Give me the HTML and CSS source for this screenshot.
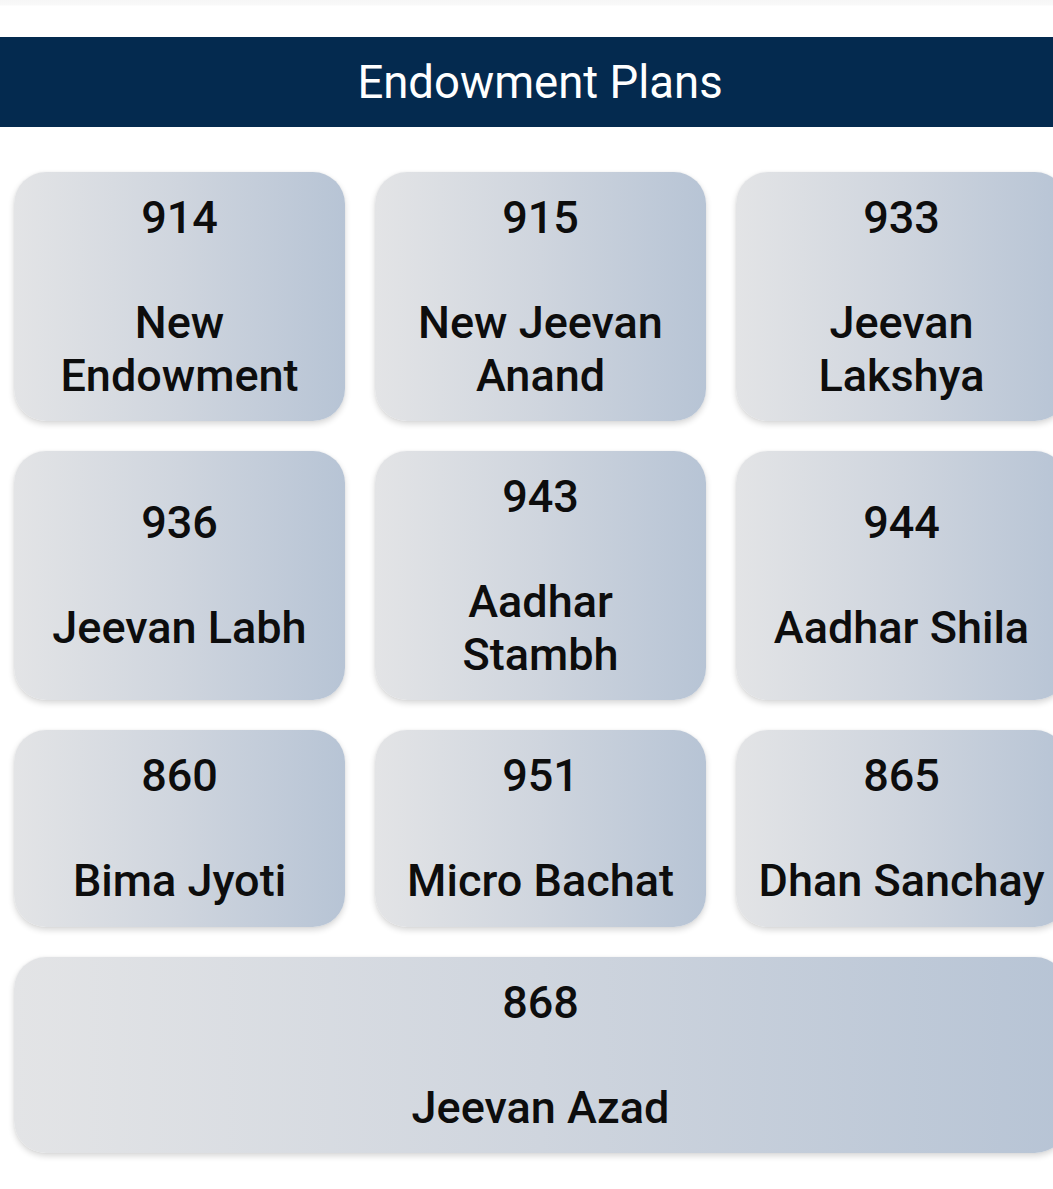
FILE: index.html
```html
<!DOCTYPE html>
<html lang="en">
<head>
<meta charset="utf-8">
<title>Endowment Plans</title>
<link rel="stylesheet" href="styles.css">
</head>
<body>
<div class="page">
  <header class="title-bar">Endowment Plans</header>
  <main class="plans">
    <div class="plan"><span>914</span><span class="gap"></span><span>New<br>Endowment</span></div>
    <div class="plan"><span>915</span><span class="gap"></span><span>New Jeevan<br>Anand</span></div>
    <div class="plan"><span>933</span><span class="gap"></span><span>Jeevan<br>Lakshya</span></div>
    <div class="plan"><span>936</span><span class="gap"></span><span>Jeevan Labh</span></div>
    <div class="plan"><span>943</span><span class="gap"></span><span>Aadhar<br>Stambh</span></div>
    <div class="plan"><span>944</span><span class="gap"></span><span>Aadhar Shila</span></div>
    <div class="plan"><span>860</span><span class="gap"></span><span>Bima Jyoti</span></div>
    <div class="plan"><span>951</span><span class="gap"></span><span>Micro Bachat</span></div>
    <div class="plan"><span>865</span><span class="gap"></span><span>Dhan Sanchay</span></div>
    <div class="plan plan-wide"><span>868</span><span class="gap"></span><span>Jeevan Azad</span></div>
  </main>
</div>
</body>
</html>
```
FILE: styles.css
```css
html, body {
  margin: 0;
  padding: 0;
  overflow: hidden;
}
html {
  background: #ffffff linear-gradient(#f6f6f6 0, #f9f9f9 5px, #ffffff 6px) no-repeat;
  background-size: 100% 8px;
}
body {
  font-family: Roboto, "Noto Sans", "Liberation Sans", sans-serif;
  color: #111;
  width: 1080px;
}
.page {
  width: 1080px;
  padding-top: 37px;
}
.title-bar {
  background: #042a4f;
  color: #fff;
  height: 90px;
  display: flex;
  align-items: center;
  justify-content: center;
  font-size: 45.5px;
  font-weight: 400;
}
.plans {
  display: grid;
  grid-template-columns: repeat(3, 331px);
  column-gap: 30px;
  row-gap: 30px;
  padding: 45px 14px 30px;
}
.plan {
  display: flex;
  flex-direction: column;
  align-items: center;
  justify-content: center;
  text-align: center;
  padding: 20px 8px 19px;
  border-radius: 32px;
  background: linear-gradient(to right, #e3e4e6 0%, #cfd5de 50%, #b7c4d5 100%);
  box-shadow: 0 3px 6px rgba(0, 0, 0, 0.16), 0 0 2px rgba(0, 0, 0, 0.06);
  font-size: 45px;
  line-height: 52.5px;
  font-weight: 500;
  color: #0d0d0d;
}
.gap {
  height: 52.5px;
}
.plan-wide {
  grid-column: 1 / -1;
}
```
